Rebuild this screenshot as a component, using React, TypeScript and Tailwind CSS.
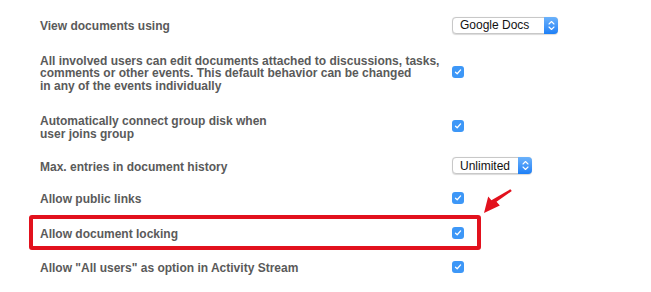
import type { ReactNode } from 'react';

function Checkbox() {
    return (
        <span className="flex h-[12px] w-[12px] items-center justify-center rounded-[3px] bg-[#3d97f7]">
            <svg width="8" height="8" viewBox="0 0 8 8" fill="none">
                <path d="M1.5 4.2 3.2 5.8 6.6 1.9" stroke="white" strokeWidth="1.3" strokeLinecap="round" strokeLinejoin="round" />
            </svg>
        </span>
    );
}

function Select({ label, width }: { label: string; width: string }) {
    return (
        <span className={`relative flex h-[17px] items-center rounded-[4px] border border-[#c8c8c8] bg-white shadow-[0_0.5px_1px_rgba(0,0,0,0.15)] ${width}`}>
            <span className="pl-[7px] text-[12px] text-[#111]">{label}</span>
            <span className="absolute top-[-1px] right-[-1px] bottom-[-1px] flex w-[14px] items-center justify-center rounded-r-[4px] bg-gradient-to-b from-[#6bb2fb] to-[#1b7ff6]">
                <svg width="7" height="11" viewBox="0 0 7 11" fill="none">
                    <path d="M1 4 3.5 1.5 6 4M1 7 3.5 9.5 6 7" stroke="white" strokeWidth="1.1" strokeLinecap="round" strokeLinejoin="round" />
                </svg>
            </span>
        </span>
    );
}

function Row({ height, control, children, marked }: { height: string; control: ReactNode; children: ReactNode; marked?: boolean }) {
    return (
        <div
            className={`grid grid-cols-[412px_auto] items-center rounded-[3px] border-4 pl-[7px] ${height} ${
                marked ? 'border-[#e2111d]' : 'border-transparent'
            }`}
        >
            <div className="pt-[3px] text-[12px] font-bold leading-[12.5px] text-[#5a5a5a]">{children}</div>
            <div className="flex items-center">{control}</div>
        </div>
    );
}

export default function App() {
    return (
        <div className="relative h-[292px] w-[651px] overflow-hidden bg-white pt-[8px] font-['Liberation_Sans',Arial,sans-serif]">
            <div className="ml-[29px] w-[452px]">
                <Row height="h-[34px]" control={<Select label="Google Docs" width="w-[106px]" />}>
                    View documents using
                </Row>
                <Row height="h-[60px]" control={<Checkbox />}>
                    All involved users can edit documents attached to discussions, tasks,
                    <br />
                    comments or other events. This default behavior can be changed
                    <br />
                    in any of the events individually
                </Row>
                <Row height="h-[48px]" control={<Checkbox />}>
                    Automatically connect group disk when
                    <br />
                    user joins group
                </Row>
                <Row height="h-[31px]" control={<Select label="Unlimited" width="w-[80px]" />}>
                    Max. entries in document history
                </Row>
                <Row height="h-[34px]" control={<Checkbox />}>
                    Allow public links
                </Row>
                <Row height="h-[35px]" control={<Checkbox />} marked>
                    Allow document locking
                </Row>
                <Row height="h-[33px]" control={<Checkbox />}>
                    Allow "All users" as option in Activity Stream
                </Row>
            </div>

            {/* annotation arrow pointing at the marked row */}
            <svg className="absolute top-[188px] left-[482px]" width="32" height="28" viewBox="0 0 32 28">
                <path d="M29.8 3 L14.5 13.8 L17.8 17.6 L2 25 L6.2 8.4 L9.4 12.2 L28.4 1.2 Z" fill="#e2111d" />
            </svg>
        </div>
    );
}
